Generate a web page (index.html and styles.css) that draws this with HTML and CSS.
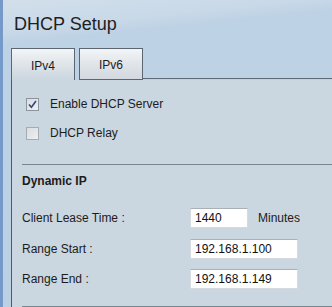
FILE: index.html
```html
<!DOCTYPE html>
<html>
<head>
  <title>DHCP Setup</title>
  <link rel="stylesheet" href="styles.css">
</head>
<body>
  <div class="page">
    <div class="header">
      <h1 class="title">DHCP Setup</h1>
      <div class="tabs">
        <div class="tab active">IPv4</div>
        <div class="tab">IPv6</div>
        <div class="tab-fill"></div>
      </div>
    </div>
    <div class="panel">
      <div class="check-row">
        <span class="box checked">
          <svg width="9" height="9" viewBox="0 0 9 9"><path d="M1 4.5 L3.4 7.2 L8 1" fill="none" stroke="#33477a" stroke-width="1.6"/></svg>
        </span>
        <span>Enable DHCP Server</span>
      </div>
      <div class="check-row">
        <span class="box"></span>
        <span>DHCP Relay</span>
      </div>

      <div class="rule"></div>
      <div class="section-title">Dynamic IP</div>

      <div class="fields">
        <label>Client Lease Time :</label>
        <div class="value"><input class="short" type="text" value="1440"><span>Minutes</span></div>
        <label>Range Start :</label>
        <div class="value"><input class="long" type="text" value="192.168.1.100"></div>
        <label>Range End :</label>
        <div class="value"><input class="long" type="text" value="192.168.1.149"></div>
      </div>

      <div class="rule bottom"></div>
    </div>
  </div>
</body>
</html>
```

FILE: styles.css
```css
html, body {
  margin: 0;
  padding: 0;
  height: 100%;
}

body {
  font-family: "Liberation Sans", Arial, sans-serif;
  font-size: 12px;
  color: #1c1c1c;
  background-color: #bdd1e4;
  overflow: hidden;
}

.page {
  height: 100%;
  display: flex;
  flex-direction: column;
  border-left: 3px solid #7599c9;
  padding-left: 8px;
  background: linear-gradient(174deg, #d2dfeb 0%, #c9d9e8 9%, #bed2e5 13%, #bcd0e3 100%);
}

.header {
  flex: 0 0 auto;
}

.title {
  margin: 0;
  padding: 14px 0 0 3px;
  font-size: 18px;
  line-height: 21px;
  font-weight: normal;
  color: #1e1e1e;
}

.tabs {
  display: flex;
  align-items: flex-end;
  gap: 4px;
  margin-top: 13px;
  height: 32px;
}

.tab {
  box-sizing: border-box;
  width: 64px;
  height: 32px;
  padding-top: 9px;
  text-align: center;
  border: 1px solid #5b6672;
  background: linear-gradient(#f3f5f7, #dde2e7 60%, #d3d9df);
}

.tab.active {
  border-bottom: none;
  padding-top: 10px;
  background: linear-gradient(#f3f5f7, #dfe4e8 50%, #cad6e0);
}

.tab-fill {
  flex: 1;
  height: 1px;
  margin-bottom: 1px;
  margin-left: -4px;
  background-color: #5f6b77;
}

.panel {
  flex: 1;
  background-color: #cad6e0;
  border-left: 1px solid #4f5b67;
  padding: 16px 0 0 14px;
}

.check-row {
  display: flex;
  align-items: center;
  gap: 11px;
  height: 16px;
  line-height: 16px;
  margin-bottom: 13px;
}

.box {
  box-sizing: border-box;
  width: 13px;
  height: 13px;
  display: flex;
  align-items: center;
  justify-content: center;
  border: 1px solid #a4acb3;
  background: linear-gradient(135deg, #d9dde1, #eef0f2);
}

.box.checked {
  border-color: #8c949c;
}

/* margins collapse with the check row above, so the full gap goes here */
.rule {
  height: 1px;
  margin: 23px 0 0 -4px;
  background-color: #78868f;
}

.section-title {
  font-weight: bold;
  line-height: 16px;
  margin: 8px 0 0 -4px;
}

.fields {
  display: grid;
  grid-template-columns: 168px auto;
  row-gap: 10.5px;
  align-items: center;
  margin: 19px 0 0 -4px;
}

.value {
  display: flex;
  align-items: center;
  gap: 10px;
}

input {
  box-sizing: border-box;
  height: 20px;
  margin: 0;
  padding: 0 0 0 4px;
  font-family: "Liberation Sans", Arial, sans-serif;
  font-size: 12px;
  color: #111;
  background-color: #fff;
  border: 1px solid #d4dadf;
  border-top-color: #a9b0b6;
  outline: none;
}

.short {
  width: 58px;
}

.long {
  width: 108px;
}

.rule.bottom {
  margin-top: 17px;
}
```
